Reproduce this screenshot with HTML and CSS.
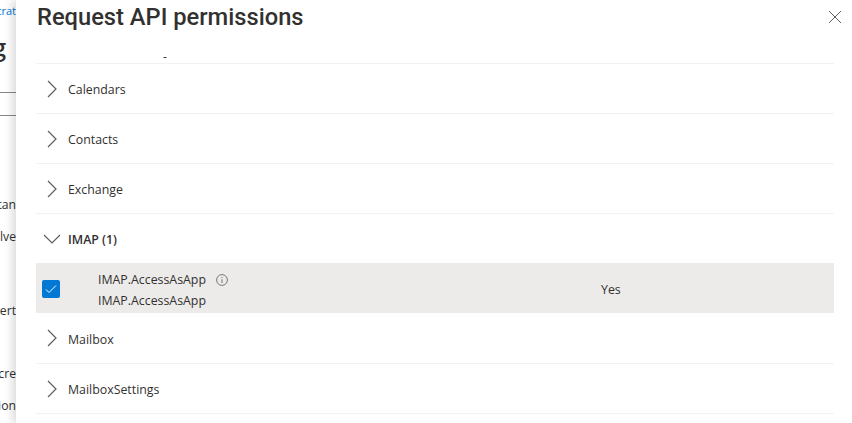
FILE: index.html
```html
<!DOCTYPE html>
<html lang="en">
<head>
    <meta charset="UTF-8">
    <title>Request API permissions</title>
    <link rel="stylesheet" href="styles.css">
</head>
<body>
    <div class="backdrop">
        <div class="crumb">trat</div>
        <div class="page-title">g</div>
        <div class="rule rule-first"></div>
        <div class="rule rule-second"></div>
        <div class="nav-item nav-tan">tan</div>
        <div class="nav-item nav-lve">lve</div>
        <div class="nav-item nav-ert">ert</div>
        <div class="nav-item nav-cre">cre</div>
        <div class="nav-item nav-ion">ion</div>
    </div>
    <div class="panel">
        <header class="panel-header">
            <h1>Request API permissions</h1>
            <svg class="close-icon" width="14" height="14" viewBox="0 0 14 14">
                <path d="M1 1L13 13M13 1L1 13" stroke="#605e5c" stroke-width="1" fill="none"/>
            </svg>
        </header>
        <div class="stray-mark">-</div>
        <div class="group-list">
            <div class="group">
                <svg class="chevron" width="12" height="18" viewBox="0 0 12 18"><path d="M2 1L10 9L2 17" stroke="#605e5c" stroke-width="1.2" fill="none"/></svg>
                <span>Calendars</span>
            </div>
            <div class="group">
                <svg class="chevron" width="12" height="18" viewBox="0 0 12 18"><path d="M2 1L10 9L2 17" stroke="#605e5c" stroke-width="1.2" fill="none"/></svg>
                <span>Contacts</span>
            </div>
            <div class="group">
                <svg class="chevron" width="12" height="18" viewBox="0 0 12 18"><path d="M2 1L10 9L2 17" stroke="#605e5c" stroke-width="1.2" fill="none"/></svg>
                <span>Exchange</span>
            </div>
            <div class="group group-open">
                <svg class="chevron-down" width="18" height="12" viewBox="0 0 18 12"><path d="M1 2L9 10L17 2" stroke="#605e5c" stroke-width="1.2" fill="none"/></svg>
                <span>IMAP (1)</span>
            </div>
            <div class="permission">
                <div class="checkbox">
                    <svg width="12" height="10" viewBox="0 0 12 10"><path d="M1 5.5L4 8.5L11 1.5" stroke="#fff" stroke-width="1" fill="none"/></svg>
                </div>
                <div class="permission-text">
                    <div class="permission-name">
                        IMAP.AccessAsApp
                        <svg class="info-icon" width="12" height="12" viewBox="0 0 12 12">
                            <circle cx="6" cy="6" r="5.4" stroke="#797775" fill="none"/>
                            <path d="M6 5.2V9M6 3V4" stroke="#797775" fill="none"/>
                        </svg>
                    </div>
                    <div>IMAP.AccessAsApp</div>
                </div>
                <div class="admin-consent">Yes</div>
            </div>
            <div class="group group-tall">
                <svg class="chevron" width="12" height="18" viewBox="0 0 12 18"><path d="M2 1L10 9L2 17" stroke="#605e5c" stroke-width="1.2" fill="none"/></svg>
                <span>Mailbox</span>
            </div>
            <div class="group">
                <svg class="chevron" width="12" height="18" viewBox="0 0 12 18"><path d="M2 1L10 9L2 17" stroke="#605e5c" stroke-width="1.2" fill="none"/></svg>
                <span>MailboxSettings</span>
            </div>
        </div>
    </div>
</body>
</html>
```

FILE: styles.css
```css
html, body {
    height: 100%;
}
body {
    margin: 0;
    display: flex;
    height: 423px;
    overflow: hidden;
    background-color: white;
    font-family: "Open Sans", "Noto Sans", sans-serif;
    color: #323130;
}
.backdrop {
    width: 16px;
    flex-shrink: 0;
    overflow: hidden;
    font-size: 12.2px;
    white-space: nowrap;
    direction: rtl;
}
.crumb {
    color: #0078d4;
    font-size: 11px;
    margin-top: 3px;
    height: 15px;
}
.page-title {
    font-size: 24px;
    font-weight: 600;
    line-height: 32px;
    margin-top: 13px;
    padding-right: 10px;
}
.rule {
    border-top: 1px solid #8a8886;
}
.rule-first {
    margin-top: 29px;
}
.rule-second {
    margin-top: 22px;
}
.nav-item {
    height: 18px;
    line-height: 18px;
}
.nav-tan { margin-top: 80px; }
.nav-lve { margin-top: 14px; }
.nav-ert { margin-top: 56px; }
.nav-cre { margin-top: 45px; }
.nav-ion { margin-top: 14px; }
.panel {
    flex: 1;
    padding: 0 18px 0 20px;
    background-color: white;
    box-shadow: -4px 0 8px rgba(0, 0, 0, 0.14);
    position: relative;
}
.panel-header {
    display: flex;
    justify-content: space-between;
    align-items: center;
    height: 34px;
}
.panel-header h1 {
    margin: 0 0 0 1px;
    font-family: Roboto, sans-serif;
    font-size: 23.7px;
    font-weight: 500;
    line-height: 34px;
}
.close-icon {
    margin-right: -8px;
}
.stray-mark {
    height: 29px;
    line-height: 6px;
    font-size: 12px;
    padding-left: 127px;
    padding-top: 20px;
    box-sizing: border-box;
}
.group-list {
    border-top: 1px solid #f3f2f1;
}
.group {
    display: flex;
    align-items: center;
    height: 49px;
    border-bottom: 1px solid #f3f2f1;
    font-size: 12.35px;
}
.group span {
    margin-left: 5px;
    margin-top: 2px;
}
.chevron {
    margin-left: 10px;
    margin-right: 5px;
}
.chevron-down {
    margin-left: 7px;
    margin-right: 2px;
}
.group-open {
    border-bottom: none;
    font-weight: 600;
}
.group-tall {
    height: 50px;
}
.permission {
    display: flex;
    align-items: center;
    height: 50px;
    padding-top: 2px;
    box-sizing: border-box;
    background-color: #edebe9;
    font-size: 12.35px;
}
.checkbox {
    width: 18px;
    height: 18px;
    margin-left: 6px;
    border-radius: 2px;
    background-color: #0078d4;
    display: flex;
    align-items: center;
    justify-content: center;
}
.permission-text {
    margin-left: 38px;
    margin-top: 2px;
    width: 503px;
    line-height: 21px;
}
.permission-name {
    display: flex;
    align-items: center;
}
.info-icon {
    margin-left: 10px;
}
```
